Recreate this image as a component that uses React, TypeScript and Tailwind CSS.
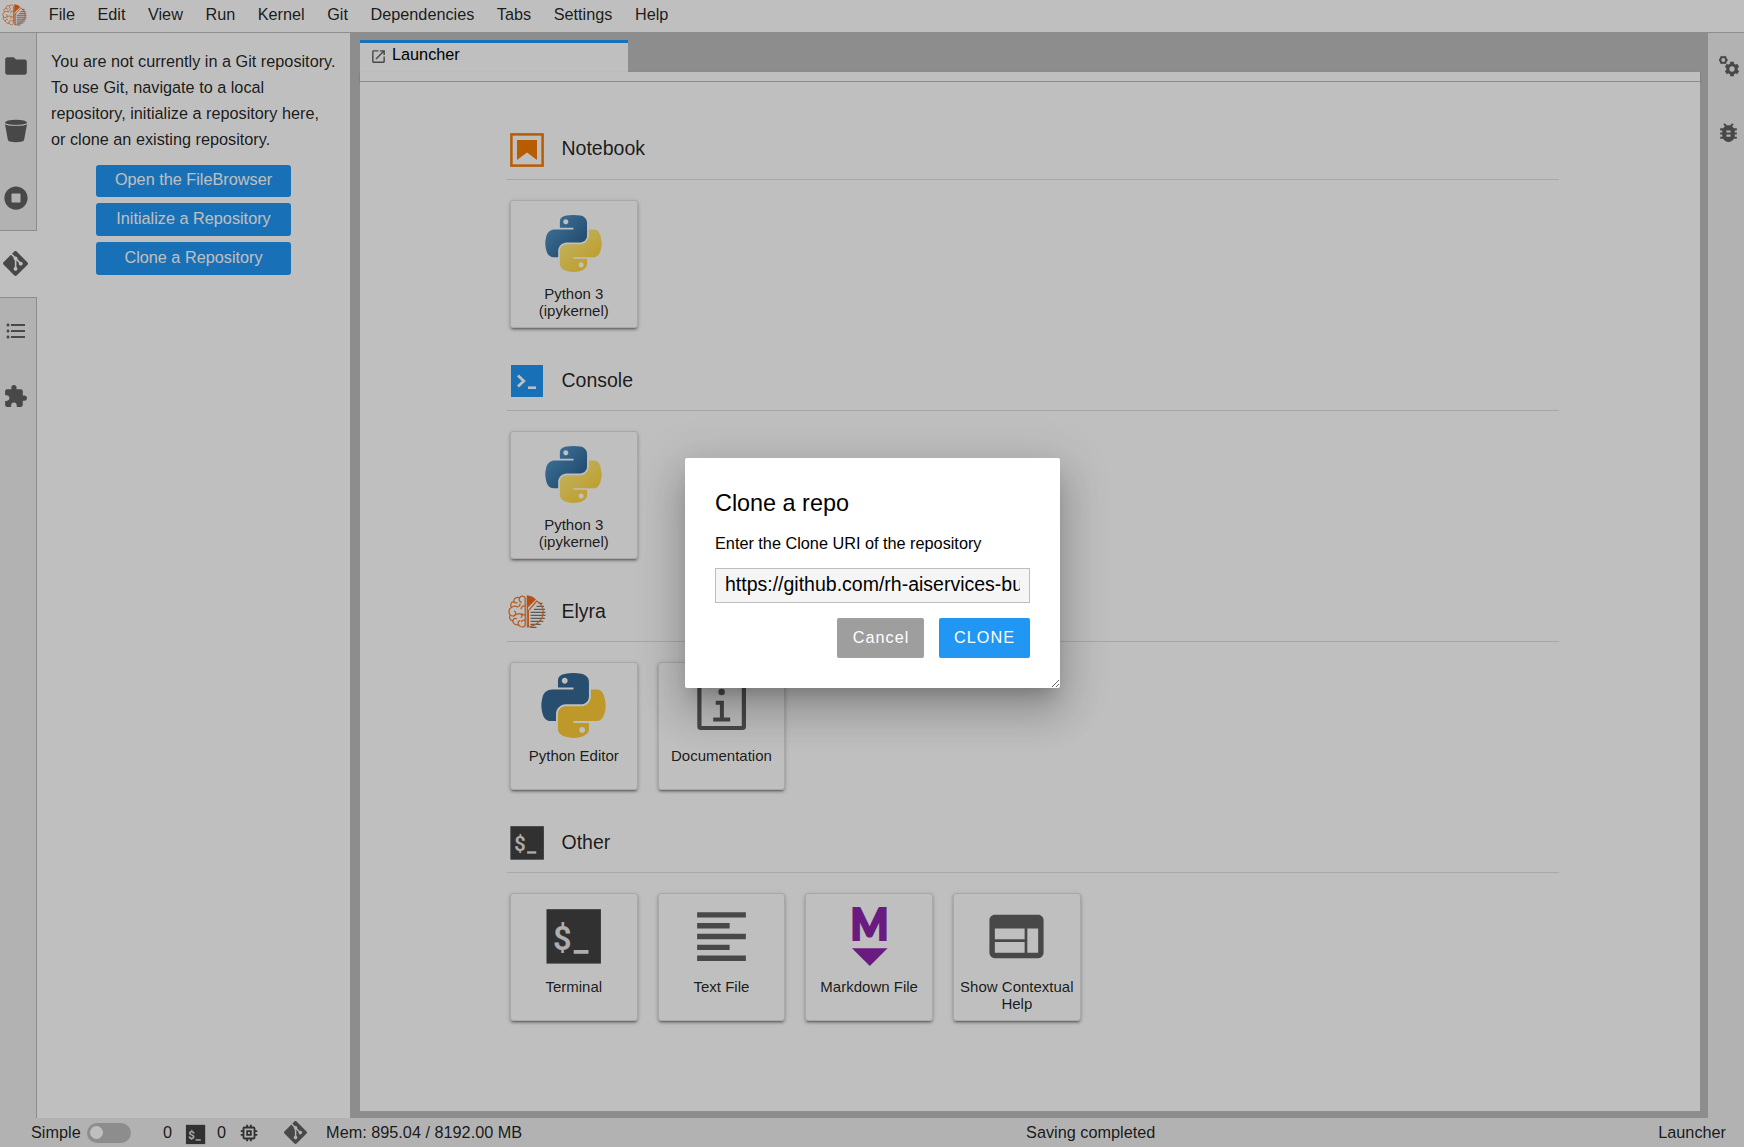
import React from "react";
import {
  MdBugReport,
  MdExtension,
  MdFolder,
  MdFormatAlignLeft,
  MdFormatListBulleted,
  MdMemory,
  MdOpenInNew,
  MdWeb,
} from "react-icons/md";
import { FaStopCircle } from "react-icons/fa";
import { SiGit } from "react-icons/si";

function PythonLogo({ id, flat, className }: { id: string; flat?: boolean; className: string }) {
  return (
    <svg viewBox="0 0 111.16 112.39" className={className}>
      <defs>
        <linearGradient id={id + "-b"} x1="0" y1="0" x2="0.75" y2="0.75">
          <stop offset="0" stopColor="#5a9fd4" />
          <stop offset="1" stopColor="#306998" />
        </linearGradient>
        <linearGradient id={id + "-y"} x1="0.85" y1="0.75" x2="0.4" y2="0.2">
          <stop offset="0" stopColor="#ffd43b" />
          <stop offset="1" stopColor="#ffe873" />
        </linearGradient>
      </defs>
      <path
        fill={flat ? "#366994" : `url(#${id}-b)`}
        d="M54.919 0C50.335.022 45.958.413 42.106 1.095 30.76 3.099 28.7 7.295 28.7 15.032v10.219h26.813v3.406H18.638c-7.793 0-14.616 4.684-16.75 13.594-2.462 10.213-2.571 16.586 0 27.25 1.906 7.938 6.457 13.594 14.25 13.594h9.218v-12.25c0-8.85 7.657-16.657 16.75-16.657h26.782c7.455 0 13.406-6.138 13.406-13.625V15.032c0-7.266-6.13-12.725-13.406-13.937C64.282.328 59.502-.02 54.919 0Zm-14.5 8.22c2.769 0 5.031 2.298 5.031 5.124 0 2.817-2.262 5.094-5.031 5.094-2.78 0-5.032-2.277-5.032-5.094 0-2.826 2.252-5.125 5.032-5.125z"
      />
      <path
        fill={flat ? "#ffcb39" : `url(#${id}-y)`}
        d="M85.638 28.657v11.906c0 9.231-7.826 17-16.75 17H42.106c-7.336 0-13.406 6.279-13.406 13.625V96.72c0 7.266 6.319 11.54 13.406 13.625 8.488 2.495 16.626 2.946 26.782 0 6.75-1.955 13.406-5.888 13.406-13.625V86.5H55.513v-3.406H95.7c7.793 0 10.696-5.435 13.406-13.594 2.8-8.399 2.68-16.476 0-27.25-1.925-7.757-5.604-13.594-13.406-13.594zM70.575 93.313c2.78 0 5.031 2.278 5.031 5.094 0 2.827-2.251 5.125-5.031 5.125-2.77 0-5.031-2.298-5.031-5.125 0-2.816 2.262-5.094 5.031-5.094z"
      />
    </svg>
  );
}

function TerminalIcon({ className }: { className: string }) {
  return (
    <svg viewBox="0 0 65 65" className={className}>
      <rect x="5.5" y="5.2" width="54.4" height="54.4" fill="#424242" />
      <text x="12" y="46" fontFamily="Roboto, sans-serif" fontWeight="600" fontSize="32.5" fill="#e9e9e9">$</text>
      <rect x="32.7" y="46" width="14.8" height="3.8" fill="#e9e9e9" />
    </svg>
  );
}

function ElyraLogo({ className }: { className: string }) {
  return (
    <svg viewBox="0 0 38 34" className={className} fill="none" strokeLinecap="round" strokeLinejoin="round">
      <g stroke="#7a7a7a" strokeWidth="1.4" strokeLinecap="butt">
        <path d="M30.5 8.4h4M28.5 11.4h7.5M26 14.4h11M22.5 17.4h15M22.5 20.4h15M22.5 23.4h14.3M22.5 26.4h12.8M22.5 29.4h10.2M22.5 32.4h6" />
      </g>
      <g stroke="#f37726" strokeWidth="1.2">
        <path d="M17.2 3.2C16.4.6 12.8.4 11.6 2.8 8.6 1.6 5.6 3.4 5.8 6.6 2.8 7 1.8 10.4 3.6 12.4.6 13.6.2 17.8 2.2 19.8.6 22.6 2.2 25.6 4.8 26c.2 3 3.4 4.6 5.8 3.6 1.2 3 5.6 3.2 6.6.6z" />
        <path d="M11.6 2.8c-1 1.8-.2 3.8 1.6 4.4M5.8 6.6c.8 1.2 2.2 1.6 3.4 1.2M9 11.8c-2-1.2-4.2-.6-5.4.6M9 11.8c2.2.2 3.2-1.4 3-3M17.2 11c-2.2-.4-4 .8-4.2 2.8M2.2 19.8c1.4 1.6 3.8 1.6 5 .2 1-1.4.6-3-.6-3.8M7.2 20c1.8-.4 2.8-1.8 4.8-1.2 2.2.4 2.2 2.6 1.2 3.6M4.8 26c.2-2 1.8-3 3.6-2.4M10.6 29.6c-1-1.4-.4-3.6 1.4-4M17.2 20c-1.6.4-2.8-.2-3.4-1.4M17.2 25.4c-1.6-.6-3 0-3.6 1.2" />
        <path d="M19.3 1v31M19.6 16.6 28.8 6c4 2.3 6.4 6.4 6.4 11 0 6.4-4.6 12.6-13.2 14.6l-2.6.4" />
        <path d="M20.5 15.6v16" strokeWidth="1" />
      </g>
      <path d="M19 .6c3.4 0 6.4 1.2 9 4L19 13.2z" fill="#f06a1c" />
    </svg>
  );
}

function NotebookIcon() {
  return (
    <svg viewBox="0 0 40 40" className="size-10">
      <rect x="4.4" y="4.4" width="31.2" height="31.2" fill="none" stroke="#f57c00" strokeWidth="2.5" />
      <path d="M10 10h20v20l-10-7.6L10 30z" fill="#f57c00" />
    </svg>
  );
}

function ConsoleIcon() {
  return (
    <svg viewBox="0 0 40 40" className="size-10">
      <rect x="4" y="4" width="32" height="32" fill="#2196f3" />
      <path d="m11 14.4 5.8 5.6-5.8 5.6" fill="none" stroke="#fff" strokeWidth="2.8" />
      <rect x="21" y="25.4" width="8" height="2.6" fill="#fff" />
    </svg>
  );
}

function DocumentationIcon() {
  return (
    <svg viewBox="0 0 65 65" className="size-[65px]" fill="none" stroke="#616161">
      <rect x="10.4" y="6" width="44.5" height="49" rx="1.5" strokeWidth="4.2" />
      <circle cx="32.6" cy="19" r="3.3" fill="#616161" stroke="none" />
      <path d="M26.7 29.7h6.2v17M24.2 46.5h17" strokeWidth="4" />
    </svg>
  );
}

function MarkdownIcon() {
  return (
    <svg viewBox="0 0 65 65" className="size-[65px] overflow-visible" fill="#8e24aa">
      <text
        x="32.6"
        y="36"
        textAnchor="middle"
        textLength="38"
        lengthAdjust="spacingAndGlyphs"
        fontFamily="Lato, sans-serif"
        fontWeight="900"
        fontSize="43.5"
        stroke="#8e24aa"
        strokeWidth="2.2"
      >
        M
      </text>
      <path d="M15 44.2h35.6L32.8 62z" />
    </svg>
  );
}

function BucketIcon() {
  return (
    <svg viewBox="0 0 24 24" className="size-6" fill="#616161">
      <ellipse cx="12" cy="3.6" rx="11" ry="2.8" />
      <path d="M1 5.2c3 2 19 2 22 0l-2.8 15.4c-.3 1.2-1 1.8-2.2 2-3.8.7-8.2.7-12 0-1.2-.2-1.9-.8-2.2-2z" />
      <path d="M2.4 5.2c4 1.5 15.2 1.5 19.2 0" fill="none" stroke="#eee" strokeWidth="0.8" />
    </svg>
  );
}

function GearsIcon() {
  return (
    <svg viewBox="0 0 22 24" className="h-6 w-[22px]" fill="none" stroke="#616161">
      <circle cx="5.3" cy="6" r="2.9" strokeWidth="1.9" />
      <path d="M1 6h1.6M8 6h1.600M3.100 2.300l.8 1.400M6.700 8.300l.8 1.400M3.100 9.700l.8-1.400M6.700 3.700l.8-1.400" strokeWidth="2.2" />
      <circle cx="14" cy="15" r="4.2" strokeWidth="3.1" />
      <path d="M14 7.800v2.400M14 19.800v2.400M7.800 11.400l2.100 1.200M18.100 17.400l2.100 1.200M7.800 18.600l2.100-1.200M18.100 12.600l2.100-1.200" strokeWidth="3.8" />
    </svg>
  );
}

const menus = ["File", "Edit", "View", "Run", "Kernel", "Git", "Dependencies", "Tabs", "Settings", "Help"];

function Card({ label, children }: { label: string; children: React.ReactNode }) {
  return (
    <div className="flex h-32 w-[127.5px] flex-col items-center rounded-[3px] border border-[#e0e0e0] bg-white pt-[10px] shadow-[0_3px_2px_-2px_rgba(0,0,0,0.3),0_2px_3px_rgba(0,0,0,0.2),0_1px_5px_rgba(0,0,0,0.12)]">
      <div className="flex size-[65px] shrink-0 items-center justify-center text-[#616161]">{children}</div>
      <div className="mt-[9px] text-center text-[15px] leading-[17px]">{label}</div>
    </div>
  );
}

function Section({ title, icon, children }: { title: string; icon: React.ReactNode; children: React.ReactNode }) {
  return (
    <section className="group h-[231px]">
      <div className="flex h-[60px] items-center gap-[14.5px] border-b border-[#e0e0e0]">
        {icon}
        <h2 className="pb-[0.5px] text-[19.5px] leading-6 group-first:pb-[2.5px]">{title}</h2>
      </div>
      <div className="mt-5 ml-[3px] flex gap-[20.2px]">{children}</div>
    </section>
  );
}

function SideTab({ children, active }: { children: React.ReactNode; active?: boolean }) {
  return (
    <div
      className={
        active
          ? "flex h-[68px] items-center border-y border-[#bdbdbd] bg-white pl-[2.5px] text-[#616161]"
          : "flex h-[65.67px] items-center border-r border-[#bdbdbd] pl-[2.5px] text-[#616161]"
      }
    >
      <div className="flex w-[26px] justify-center">{children}</div>
    </div>
  );
}

export default function App() {
  return (
    <div className="relative flex h-[1147px] w-[1744px] flex-col overflow-hidden bg-[#eee] font-['Liberation_Sans',Arial,sans-serif] text-[16.25px] leading-[21px] text-black/87">
      <header className="flex h-[33px] shrink-0 items-center border-b border-[#bdbdbd] bg-white pb-[3px]">
        <ElyraLogo className="ml-[2px] h-[22px] w-[25px]" />
        <nav className="ml-[10.5px] flex">
          {menus.map((m) => (
            <span key={m} className="px-[11.25px]">{m}</span>
          ))}
        </nav>
      </header>

      <div className="flex min-h-0 flex-1">
        <aside className="flex w-[37px] shrink-0 flex-col">
          <SideTab><MdFolder size={26} /></SideTab>
          <SideTab><BucketIcon /></SideTab>
          <SideTab><FaStopCircle size={24} className="mt-px" /></SideTab>
          <SideTab active><SiGit size={25} /></SideTab>
          <SideTab><MdFormatListBulleted size={24} /></SideTab>
          <SideTab><MdExtension size={25} className="mt-px" /></SideTab>
          <div className="flex-1 border-r border-[#bdbdbd]" />
        </aside>

        <div className="w-[313px] shrink-0 bg-white pt-[15px]">
          <p className="ml-[14px] w-[285px] leading-[26px]">
            You are not currently in a Git repository. To use Git, navigate to a local repository, initialize a repository here, or clone an existing repository.
          </p>
          <div className="mt-[13px] ml-[59px] flex w-[195px] flex-col gap-[6px]">
            {["Open the FileBrowser", "Initialize a Repository", "Clone a Repository"].map((t) => (
              <button key={t} className="h-[33px] rounded-[3px] bg-[#2196f3] pb-[3px] text-center text-white first:h-8">{t}</button>
            ))}
          </div>
        </div>

        <main className="flex min-w-0 flex-1 flex-col bg-[#bdbdbd] pt-[7px] pr-2 pb-[7px] pl-[10px]">
          <div className="flex h-8 w-[268px] shrink-0 items-center gap-[5px] border-t-[3px] border-[#2196f3] bg-white pb-[7px] pl-[10px] text-black">
            <MdOpenInNew size={17} className="mt-[4px] text-[#616161]" />
            <span>Launcher</span>
          </div>
          <div className="h-[10px] shrink-0 border-b border-[#bdbdbd] bg-white shadow-[0_1px_2px_rgba(0,0,0,0.24)]" />
          <div className="min-h-0 flex-1 bg-white pt-[38px] pr-[141px] pl-[147px]">
            <Section title="Notebook" icon={<NotebookIcon />}>
              <Card label="Python 3 (ipykernel)"><PythonLogo id="nb" className="size-[57px]" /></Card>
            </Section>
            <Section title="Console" icon={<ConsoleIcon />}>
              <Card label="Python 3 (ipykernel)"><PythonLogo id="cs" className="size-[57px]" /></Card>
            </Section>
            <Section title="Elyra" icon={<ElyraLogo className="h-[34px] w-10" />}>
              <Card label="Python Editor"><PythonLogo id="ed" flat className="size-[65px]" /></Card>
              <Card label="Documentation"><DocumentationIcon /></Card>
            </Section>
            <Section title="Other" icon={<TerminalIcon className="size-10" />}>
              <Card label="Terminal"><TerminalIcon className="size-[65px]" /></Card>
              <Card label="Text File"><MdFormatAlignLeft size={65} /></Card>
              <Card label="Markdown File"><MarkdownIcon /></Card>
              <Card label="Show Contextual Help"><MdWeb size={65} /></Card>
            </Section>
          </div>
        </main>

        <aside className="flex w-9 shrink-0 flex-col text-[#616161]">
          <div className="flex h-[66px] items-center justify-center pl-[5px]"><GearsIcon /></div>
          <div className="flex h-[66px] items-center justify-center pl-[5px]"><MdBugReport size={25} /></div>
        </aside>
      </div>

      <footer className="flex h-[29px] shrink-0 items-center pr-[18px] pl-[31px]">
        <span className="w-[50px]">Simple</span>
        <span className="ml-[6px] flex h-5 w-11 items-center rounded-full bg-[#bdbdbd] pl-[3px]">
          <span className="size-[13px] rounded-full bg-white" />
        </span>
        <span className="ml-8">0</span>
        <TerminalIcon className="mt-[3px] ml-[12px] size-[23px]" />
        <span className="ml-[10px]">0</span>
        <MdMemory size={22} className="ml-[12px] text-[#424242]" />
        <SiGit size={23} className="ml-[24px] text-[#616161]" />
        <span className="ml-[19px]">Mem: 895.04 / 8192.00 MB</span>
        <span className="ml-[504px]">Saving completed</span>
        <span className="ml-auto">Launcher</span>
      </footer>

      <div className="absolute inset-0 flex items-center justify-center bg-black/25 pb-px pl-px">
        <div
          role="dialog"
          className="h-[230px] w-[375px] resize overflow-hidden rounded-[2px] bg-white p-[30px] text-black shadow-[0_12.5px_16.25px_-7.5px_rgba(0,0,0,0.2),0_25px_39px_4px_rgba(0,0,0,0.14),0_10px_47.5px_9px_rgba(0,0,0,0.12)]"
        >
          <h1 className="text-[23.4px] leading-[30px]">Clone a repo</h1>
          <p className="mt-[15px]">Enter the Clone URI of the repository</p>
          <input
            readOnly
            value="https://github.com/rh-aiservices-bu/"
            className="mt-[14px] block h-[35px] w-full border border-[#bdbdbd] bg-[#f5f5f5] px-[9px] pb-[2px] text-[19.5px] outline-none"
          />
          <div className="mt-[15px] flex justify-end gap-[15px] tracking-[1px] text-white">
            <button className="h-10 w-[87px] rounded-[2px] bg-[#9e9e9e] pb-px pl-px">Cancel</button>
            <button className="h-10 w-[91px] rounded-[2px] bg-[#2196f3] pb-px">CLONE</button>
          </div>
        </div>
      </div>
    </div>
  );
}
